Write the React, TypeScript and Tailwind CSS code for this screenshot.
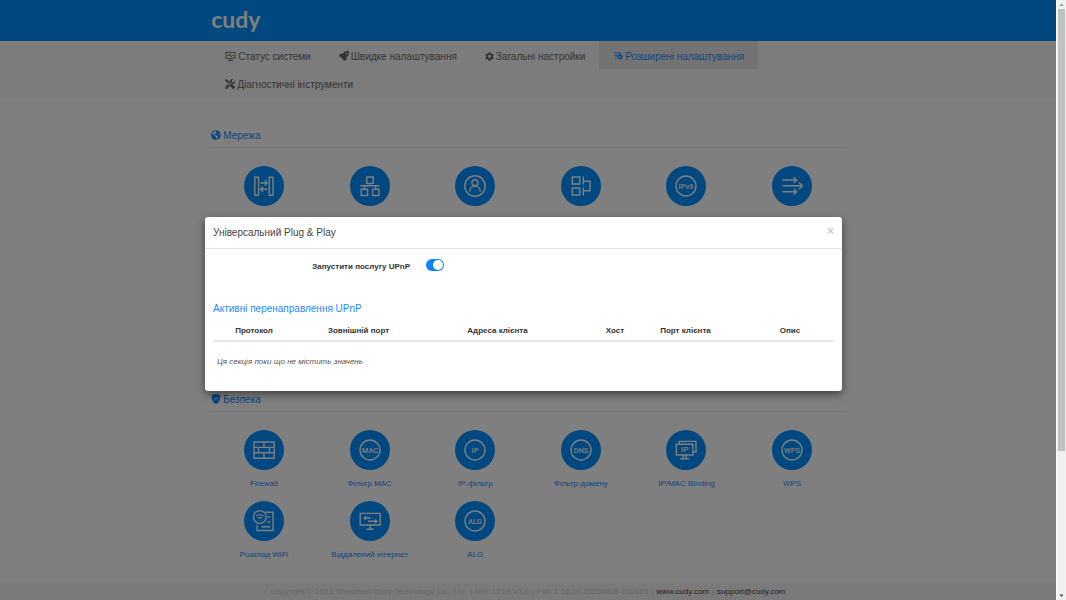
import type { ReactNode } from "react";
import { FaCog, FaGlobeAmericas, FaRocket, FaTools } from "react-icons/fa";
import { BsShieldFillCheck } from "react-icons/bs";

const StatusIcon = () => (
  <svg viewBox="0 0 12 12" className="h-[11px] w-[11px]" fill="none" stroke="currentColor">
    <path d="M1 1.5h10v6.5H1zM6 8v2.5M3 10.5h6M2.5 5h2l1-1.8L7 6.4 8 5h1.5" />
  </svg>
);

const AdvancedIcon = () => (
  <svg viewBox="0 0 12 12" className="h-[10px] w-[10px]" fill="none" stroke="currentColor">
    <path d="M1 2.5h9M2 5.5h3M2.5 8.5h2" strokeWidth="1.2" />
    <circle cx="8.4" cy="7" r="2.1" strokeWidth="1.9" />
  </svg>
);

const navItems = [
  { label: "Статус системи", icon: <StatusIcon /> },
  { label: "Швидке налаштування", icon: <FaRocket size={10} /> },
  { label: "Загальні настройки", icon: <FaCog size={9} /> },
  { label: "Розширені налаштування", icon: <AdvancedIcon />, active: true },
  { label: "Діагностичні інструменти", icon: <FaTools size={10} /> },
];

const RingText = ({ text }: { text: string }) => (
  <>
    <circle cx="20" cy="20" r="10" />
    <text
      x="20"
      y="22.6"
      textAnchor="middle"
      fontFamily="Roboto, sans-serif"
      fontSize="7.5"
      fontWeight="500"
      fill="currentColor"
      stroke="none"
    >
      {text}
    </text>
  </>
);

type Tile = { name: string; icon: ReactNode };

const networkTiles: Tile[] = [
  {
    name: "WAN",
    icon: (
      <path d="M10.8 11.2h3.8v18h-3.8zM25.2 11.2H29v18h-3.8zM16.5 17H23M20.7 14.5l2.5 2.5-2.5 2.5M23.2 23.3h-6.5M19 20.8l-2.5 2.5 2.5 2.5" />
    ),
  },
  {
    name: "LAN",
    icon: (
      <path d="M16.8 11h6.4v6.4h-6.4zM20 17.4v2.3M10.3 19.8h19.2M14.5 19.8V23M25.7 19.8V23M11.3 23.2h6.3v6.3h-6.3zM22.6 23.2h6.3v6.3h-6.3z" />
    ),
  },
  {
    name: "Клієнти",
    icon: (
      <>
        <circle cx="20" cy="20" r="10.2" />
        <circle cx="20" cy="16.8" r="3" />
        <path d="M14.7 25.8c.3-7.6 10.3-7.6 10.6 0" />
      </>
    ),
  },
  {
    name: "VLAN",
    icon: (
      <path d="M11.3 11h7.4v7h-7.4zM11.3 22h7.4v7h-7.4zM22.3 10.5v8M22.3 21.5v8M22.3 15.2H29v9.6h-6.7" />
    ),
  },
  { name: "IPv6", icon: <RingText text="IPv6" /> },
  {
    name: "Маршрути",
    icon: (
      <path d="M10.3 14h14M21.8 11.2l2.8 2.8-2.8 2.8M10.3 19.8h20M27 16.4l3.4 3.4-3.4 3.4M10.3 25.8h14M21.8 23l2.8 2.8-2.8 2.8" />
    ),
  },
];

const securityTiles: Tile[] = [
  {
    name: "Firewall",
    icon: (
      <path d="M10 12h20.2v16.2H10zM10 17.4h20.2M10 22.8h20.2M20 12v5.4M14.5 17.4v5.4M25.5 17.4v5.4M20 22.8v5.4" />
    ),
  },
  { name: "Фільтр MAC", icon: <RingText text="MAC" /> },
  { name: "IP-фільтр", icon: <RingText text="IP" /> },
  { name: "Фільтр домену", icon: <RingText text="DNS" /> },
  {
    name: "IP/MAC Binding",
    icon: (
      <>
        <path d="M10.3 14.3h16.6V25H10.3zM13.2 14v-2.6H30V22h-2.8M17 25v3.8M20 25v3.8M14 28.9h9.3" />
        <text
          x="18.8"
          y="22.4"
          textAnchor="middle"
          fontFamily="Roboto, sans-serif"
          fontSize="8"
          fontWeight="500"
          fill="currentColor"
          stroke="none"
        >
          IP
        </text>
      </>
    ),
  },
  { name: "WPS", icon: <RingText text="WPS" /> },
  {
    name: "Розклад WiFi",
    icon: (
      <>
        <circle cx="15.8" cy="16" r="6.4" />
        <path d="M12.3 15c2-1.9 5-1.9 7 0M13.9 17.2c1.2-1 2.6-1 3.8 0M15.8 19v.4" />
        <path d="M21.5 11.3H29v18.2H13.2v-6M23.5 16h2.5M23.5 20.8h2.5M17.3 25.7H26" />
      </>
    ),
  },
  {
    name: "Віддалений інтернет",
    icon: (
      <path d="M10.2 12.4h20V24h-20zM20.2 24v4M16.5 28.2h7.4M14.2 17h6.5M16 15.2L14.2 17l1.8 1.8M18 20.3h8.8M25 18.4l1.9 1.9-1.9 1.9" />
    ),
  },
  { name: "ALG", icon: <RingText text="ALG" /> },
];

const TileButton = ({ tile, labelled }: { tile: Tile; labelled?: boolean }) => (
  <button
    type="button"
    aria-label={tile.name}
    className="flex flex-col items-center gap-2 text-[#1a8cff]"
  >
    <span className="h-10 w-10 rounded-full bg-[#0090ff] text-white">
      <svg
        viewBox="0 0 40 40"
        className="h-10 w-10"
        fill="none"
        stroke="currentColor"
        strokeWidth="1.4"
      >
        {tile.icon}
      </svg>
    </span>
    {labelled && (
      <span className="text-[8px] leading-3 whitespace-nowrap">{tile.name}</span>
    )}
  </button>
);

const SectionTitle = ({ icon, title }: { icon: ReactNode; title: string }) => (
  <h2 className="flex h-[25px] items-center gap-0.5 border-b border-[#f0f0f0] text-[10px] text-[#1a8cff]">
    {icon}
    {title}
  </h2>
);

const UpnpDialog = () => (
  <div
    role="dialog"
    aria-labelledby="upnp-title"
    className="w-full max-w-[637px] rounded-[3px] bg-white pb-2.5 text-[#333] shadow-[0_3px_9px_rgba(0,0,0,0.5)]"
  >
    <div className="flex h-8 items-center justify-between border-b border-[#e5e5e5] px-2">
      <h3 id="upnp-title" className="text-[10px] text-[#444]">
        Універсальний Plug &amp; Play
      </h3>
      <button
        type="button"
        aria-label="Close"
        className="pb-1 text-[12px] leading-3 font-bold text-[#ccc]"
      >
        ×
      </button>
    </div>
    <div className="px-2">
      <div className="flex h-9 items-center gap-4">
        <label htmlFor="upnp" className="w-[197px] text-right text-[8px] font-bold">
          Запустити послугу UPnP
        </label>
        <input
          id="upnp"
          type="checkbox"
          defaultChecked
          className="mb-1 h-3 w-[18px] appearance-none rounded-full bg-[#ccc] before:block before:h-2.5 before:w-2.5 before:translate-x-px before:translate-y-px before:rounded-full before:bg-white before:content-[''] checked:bg-[#0a84ff] checked:before:translate-x-[7px]"
        />
      </div>
      <h4 className="mt-4 text-[10px] leading-4 text-[#1a8cff]">
        Активні перенаправлення UPnP
      </h4>
      <table className="mt-1 w-full table-fixed text-[8px] leading-3">
        <thead>
          <tr className="h-5 border-b-2 border-[#e6e6e6]">
            <th className="w-[82px]">Протокол</th>
            <th className="w-[127px]">Зовнішній порт</th>
            <th className="w-[151px]">Адреса клієнта</th>
            <th className="w-[84px]">Хост</th>
            <th className="w-[57px]">Порт клієнта</th>
            <th className="pl-8">Опис</th>
          </tr>
        </thead>
        <tbody>
          <tr className="h-10">
            <td colSpan={6} className="pl-1 text-[#555] italic">
              Ця секція поки що не містить значень
            </td>
          </tr>
        </tbody>
      </table>
    </div>
  </div>
);

// the track sits outside the dimmed area
const ScrollBar = () => (
  <div
    aria-hidden="true"
    className="flex w-2.5 shrink-0 flex-col items-center justify-between border-l border-white bg-[#f1f1f1]"
  >
    <svg viewBox="0 0 9 9" className="h-[9px] w-[9px] shrink-0">
      <path d="M2.5 6l2-2.5 2 2.5z" fill="#999" />
    </svg>
    <div className="w-[7px] flex-1">
      <div className="h-[76%] bg-[#c1c1c1]" />
    </div>
    <svg viewBox="0 0 9 9" className="h-[9px] w-[9px] shrink-0">
      <path d="M2.5 3.5l2 2.5 2-2.5z" fill="#444" />
    </svg>
  </div>
);

export default function App() {
  return (
    <div className="flex h-screen overflow-hidden bg-white font-['Liberation_Sans',Arial,sans-serif]">
      <div className="relative flex min-w-0 flex-1 flex-col">
        <header className="h-[41px] shrink-0 bg-[#0090ff]">
          <div className="mx-auto flex h-full w-3/5 items-center">
            <a
              href="#"
              className="pb-1 font-['Lato',sans-serif] text-[23px] leading-8 font-bold text-white"
            >
              cudy
            </a>
          </div>
        </header>
        <nav className="shrink-0 bg-[#f8f8f8]">
          <div className="mx-auto flex w-3/5 flex-wrap">
            {navItems.map((item) => (
              <a
                key={item.label}
                href="#"
                className={`flex h-7 items-center gap-0.5 px-3.5 pt-0.5 text-[10px] whitespace-nowrap ${
                  item.active ? "bg-[#e7e7e7] text-[#1a8cff]" : "text-[#6a6a6a]"
                }`}
              >
                {item.icon}
                {item.label}
              </a>
            ))}
          </div>
        </nav>
        <main className="mx-auto w-3/5 flex-1 pt-[26px]">
          <section>
            <SectionTitle icon={<FaGlobeAmericas size={10} />} title="Мережа" />
            <div className="grid grid-cols-6 grid-rows-[repeat(3,71px)] items-start pt-[18px]">
              {networkTiles.map((tile) => (
                <TileButton key={tile.name} tile={tile} />
              ))}
            </div>
          </section>
          <section className="mt-2">
            <SectionTitle icon={<BsShieldFillCheck size={10} />} title="Безпека" />
            <div className="grid auto-rows-[71px] grid-cols-6 items-start pt-[18px]">
              {securityTiles.map((tile) => (
                <TileButton key={tile.name} tile={tile} labelled />
              ))}
            </div>
          </section>
        </main>
        <footer className="flex h-[17px] shrink-0 items-center justify-center gap-[3px] bg-[#f5f5f5] text-[8px] whitespace-nowrap text-[#ccc]">
          <span>Copyright © 2023 Shenzhen Cudy Technology Co., Ltd.</span>
          <span>|</span>
          <span>HW: LT18 V1.0</span>
          <span>|</span>
          <span>FW: 1.16.19-20230418-102853</span>
          <span>|</span>
          <a href="#" className="text-[#444]">
            www.cudy.com
          </a>
          <span>|</span>
          <a href="#" className="text-[#444]">
            support@cudy.com
          </a>
        </footer>
        <div className="absolute inset-0 flex items-start justify-center bg-black/50 pt-[217px] pr-[9px]">
          <UpnpDialog />
        </div>
      </div>
      <ScrollBar />
    </div>
  );
}
